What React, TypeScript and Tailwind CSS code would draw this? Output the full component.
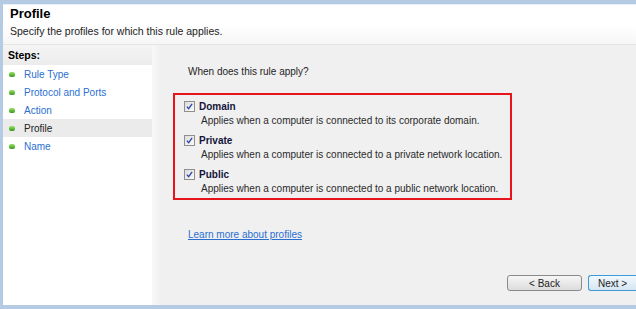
import React from "react";

/*** steps ***/
const steps = ["Rule Type", "Protocol and Ports", "Action", "Profile", "Name"];
const current = "Profile";

const profiles = [
  { name: "Domain", desc: "Applies when a computer is connected to its corporate domain." },
  { name: "Private", desc: "Applies when a computer is connected to a private network location." },
  { name: "Public", desc: "Applies when a computer is connected to a public network location." },
];

function Bullet() {
  return (
    <span className="w-[6px] h-[5px] rounded-[2px] bg-gradient-to-b from-[#9be26a] to-[#2f9a12] shrink-0" />
  );
}

function Check() {
  return (
    <span className="w-[11px] h-[11px] border border-[#8f8f8f] bg-gradient-to-br from-[#dcdcdc] to-[#fafafa] flex items-center justify-center shrink-0">
      <svg width="7" height="7" viewBox="0 0 8 8">
        <path d="M1 4.2 L3 6.5 L7 1" fill="none" stroke="#2a3fa8" strokeWidth="1.4" />
      </svg>
    </span>
  );
}

/*****************************************************
           Component
*****************************************************/
export default function App() {
  return (
    <div
      className="w-[636px] h-[309px] bg-[#b5cbe4] pt-[4px] pl-[3px] pb-[4px] flex flex-col overflow-hidden text-[10px] text-[#1e1e1e]"
      style={{ fontFamily: '"Liberation Sans", Arial, sans-serif' }}
    >
      {/* header */}
      <div className="h-[40px] border-t border-[#e6eef6] pl-[7px] bg-gradient-to-b from-white via-white to-[#f6f6f6]">
        <div className="text-[13px] font-bold leading-[17px] text-black">Profile</div>
        <div className="mt-[3px] text-[10.5px] leading-[13px] text-[#222]">
          Specify the profiles for which this rule applies.
        </div>
      </div>

      <div className="flex-1 flex bg-[#f0f0f0] border-t border-[#e4e4e4]">
        {/* steps */}
        <div className="w-[149px] bg-white flex flex-col">
          <div className="h-[20px] bg-gradient-to-b from-[#f4f4f4] to-[#ececec] pl-[5px] pt-[1px] flex items-center text-[10.5px] font-bold text-black">
            Steps:
          </div>
          <div className="flex flex-col">
            {steps.map((s) => (
              <div
                key={s}
                className={`h-[18px] flex items-center gap-[9px] pl-[6px] ${
                  s === current ? "bg-[#ebebeb] text-[#222]" : "text-[#2a6fd0]"
                }`}
              >
                <Bullet />
                <span>{s}</span>
              </div>
            ))}
          </div>
        </div>
        <div className="w-[9px] bg-gradient-to-r from-[#f8f8f8] to-[#f0f0f0]" />

        {/* content */}
        <div className="flex-1 flex flex-col pl-[12px] pt-[20px] relative">
          <div className="pl-[15px] leading-[13px]">When does this rule apply?</div>

          <div className="mt-[15px] w-[339px] h-[107px] border-2 border-[#e8141c] pl-[9px] pt-[5px] flex flex-col gap-[6px]">
            {profiles.map((p) => (
              <div key={p.name} className="flex flex-col">
                <div className="flex items-center gap-[4px] h-[13px]">
                  <Check />
                  <span className="font-bold text-[#14143a] leading-[13px]">{p.name}</span>
                </div>
                <div className="pl-[17px] leading-[15px] text-[#2a2a2a]">{p.desc}</div>
              </div>
            ))}
          </div>

          <div className="mt-[27px] pl-[15px]">
            <span className="text-[#2a6fd0] underline leading-[13px]">Learn more about profiles</span>
          </div>

          <div className="absolute right-0 bottom-[14px] flex gap-[6px]">
            <button className="w-[75px] h-[16px] rounded-[3px] border border-[#8a8a8a] bg-gradient-to-b from-[#f6f6f6] to-[#dcdcdc] text-[10px] leading-[13px] text-[#222]">
              &lt; Back
            </button>
            <button className="w-[48px] h-[16px] rounded-l-[3px] border border-r-0 border-[#3c9ad6] bg-gradient-to-b from-[#f2f8fc] to-[#d6e6f2] text-[10px] leading-[13px] text-[#222]">
              Next &gt;
            </button>
          </div>
        </div>
      </div>
    </div>
  );
}
